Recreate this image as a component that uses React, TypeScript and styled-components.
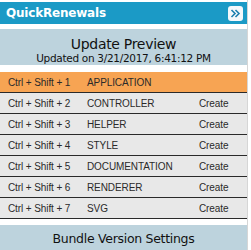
import React from "react";
import styled, { createGlobalStyle } from "styled-components";

const Global = createGlobalStyle`
  html, body { margin: 0; padding: 0; background: #fff; }
  body { font-family: "DejaVu Sans", Verdana, sans-serif; }
`;

const Widget = styled.div`
  width: 248px;
  height: 250px;
  overflow: hidden;
  padding-top: 2px;
  box-sizing: border-box;
  border-right: 1px solid #d6d6d6;
  display: flex;
  flex-direction: column;
`;

const Header = styled.div`
  height: 22px;
  flex-shrink: 0;
  background: #1b9ac6;
  display: flex;
  align-items: center;
  justify-content: space-between;
  padding: 0 4px 0 6px;
`;

const Title = styled.span`
  color: #fff;
  font-family: "DejaVu Sans", Verdana, sans-serif;
  font-weight: bold;
  font-size: 12px;
  letter-spacing: -0.2px;
`;

const ExpandButton = styled.div`
  width: 15px;
  height: 15px;
  border-radius: 3px;
  background: #f4f8fb;
  display: flex;
  align-items: center;
  justify-content: center;
`;

const Panel = styled.div`
  margin-top: 5px;
  height: 36px;
  flex-shrink: 0;
  box-sizing: border-box;
  padding-top: 7px;
  background: #bdd3dd;
  display: flex;
  flex-direction: column;
  align-items: center;
  color: #111;
  font-family: "DejaVu Sans", Verdana, sans-serif;
`;

const PanelTitle = styled.div`
  font-size: 14px;
  line-height: 16px;
  letter-spacing: -0.3px;
`;

const PanelSub = styled.div`
  font-size: 10.5px;
  line-height: 12px;
  letter-spacing: -0.3px;
`;

const List = styled.div`
  margin-top: 7px;
  display: flex;
  flex-direction: column;
  flex-shrink: 0;
`;

const Row = styled.div<{ $active?: boolean }>`
  height: 20px;
  border-bottom: 1px solid #2a2a2a;
  background: ${(p) => (p.$active ? "#f7a453" : "#e8e8e8")};
  display: grid;
  grid-template-columns: 79px 112px 1fr;
  align-items: center;
  padding-left: 8px;
  font-family: "Liberation Sans", Arial, sans-serif;
  font-size: 10px;
  letter-spacing: -0.1px;
  color: #2a2a2a;
`;

const Cell = styled.span``;

const Footer = styled.div`
  margin-top: 6px;
  flex: 1;
  background: #bdd3dd;
  display: flex;
  justify-content: center;
  padding-top: 6px;
  font-family: "DejaVu Sans", Verdana, sans-serif;
  font-size: 12.5px;
  line-height: 15px;
  letter-spacing: -0.3px;
  color: #111;
`;

const items = [
  "APPLICATION",
  "CONTROLLER",
  "HELPER",
  "STYLE",
  "DOCUMENTATION",
  "RENDERER",
  "SVG",
];

export default function App() {
  return (
    <>
      <Global />
      <Widget>
        <Header>
          <Title>QuickRenewals</Title>
          <ExpandButton>
            <svg width="11" height="9" viewBox="0 0 11 9">
              <path d="M1.5 1 L5 4.5 L1.5 8 M5.5 1 L9 4.5 L5.5 8" fill="none" stroke="#1b7fb0" strokeWidth="1.6" />
            </svg>
          </ExpandButton>
        </Header>
        <Panel>
          <PanelTitle>Update Preview</PanelTitle>
          <PanelSub>Updated on 3/21/2017, 6:41:12 PM</PanelSub>
        </Panel>
        <List>
          {items.map((name, i) => (
            <Row key={name} $active={i === 0}>
              <Cell>Ctrl + Shift + {i + 1}</Cell>
              <Cell>{name}</Cell>
              <Cell>{i === 0 ? "" : "Create"}</Cell>
            </Row>
          ))}
        </List>
        <Footer>Bundle Version Settings</Footer>
      </Widget>
    </>
  );
}
